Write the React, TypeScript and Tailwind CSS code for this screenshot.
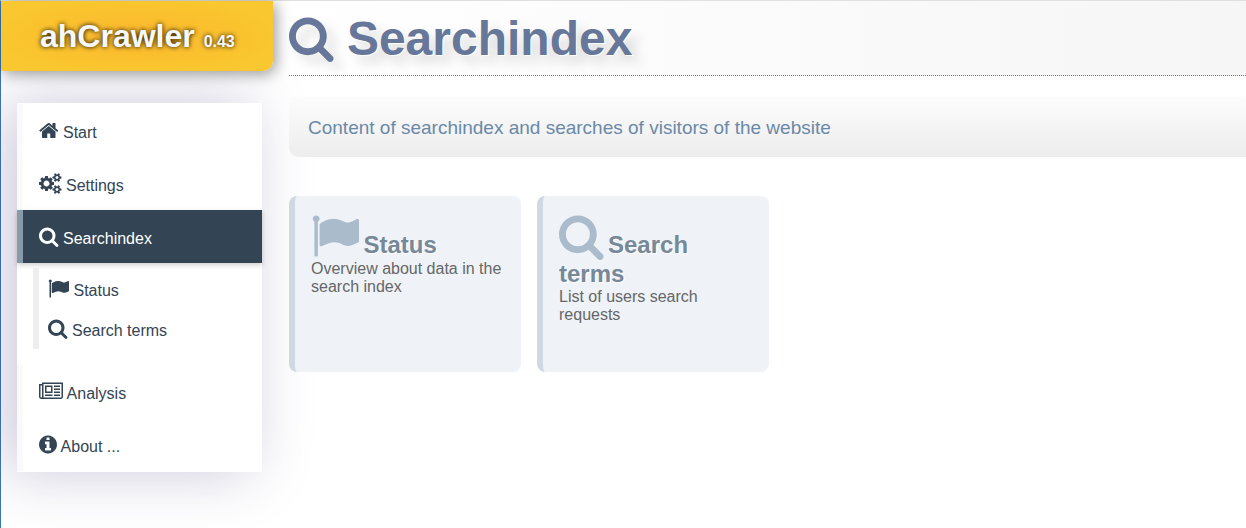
import React from "react";

type Glyph = { box: string; d: string };

const glyphs: Record<string, Glyph> = {
  home: {
    box: "64 0 1664 1792",
    d: "M1472 992v480q0 26-19 45t-45 19h-384v-384h-256v384h-384q-26 0-45-19t-19-45v-480q0-1 .5-3t.5-3l575-474 575 474q1 2 1 6zm223-69l-62 74q-8 9-21 11h-3q-13 0-21-7l-692-577-692 577q-12 8-24 7-13-2-21-11l-62-74q-8-10-7-23.5t11-21.5l719-599q32-26 76-26t76 26l244 204v-195q0-14 9-23t23-9h192q14 0 23 9t9 23v408l219 182q10 8 11 21.5t-7 23.5z",
  },
  cogs: {
    box: "-64 0 1920 1792",
    d: "M832 896q0-106-75-181t-181-75-181 75-75 181 75 181 181 75 181-75 75-181zm768 512q0-52-38-90t-90-38-90 38-38 90q0 53 37.5 90.5t90.5 37.5 90.5-37.5 37.5-90.5zm0-1024q0-52-38-90t-90-38-90 38-38 90q0 53 37.5 90.5t90.5 37.5 90.5-37.5 37.5-90.5zm-384 421v185q0 10-7 19.5t-16 10.5l-155 24q-11 35-32 76 34 48 90 115 7 11 7 20 0 12-7 19-23 30-82.5 89.5t-78.5 59.5q-11 0-21-7l-115-90q-37 19-77 31-11 108-23 155-7 24-30 24h-186q-11 0-20-7.5t-10-17.5l-23-153q-34-10-75-31l-118 89q-7 7-20 7-11 0-21-8-144-133-144-160 0-9 7-19 10-14 41-53t47-61q-23-44-35-82l-152-24q-10-1-17-9.5t-7-19.5v-185q0-10 7-19.5t16-10.5l155-24q11-35 32-76-34-48-90-115-7-11-7-20 0-12 7-20 22-30 82-89t79-59q11 0 21 7l115 90q34-18 77-32 11-108 23-154 7-24 30-24h186q11 0 20 7.5t10 17.5l23 153q34 10 75 31l118-89q8-7 20-7 11 0 21 8 144 133 144 160 0 8-7 19-12 16-42 54t-45 60q23 48 34 82l152 23q10 2 17 10.5t7 19.5zm640 533v140q0 16-149 31-12 27-30 52 51 113 51 138 0 4-4 7-122 71-124 71-8 0-46-47t-52-68q-20 2-30 2t-30-2q-14 21-52 68t-46 47q-2 0-124-71-4-3-4-7 0-25 51-138-18-25-30-52-149-15-149-31v-140q0-16 149-31 13-29 30-52-51-113-51-138 0-4 4-7 4-2 35-20t59-34 30-16q8 0 46 46.5t52 67.5q20-2 30-2t30 2q51-71 92-112l6-2q4 0 124 70 4 3 4 7 0 25-51 138 17 23 30 52 149 15 149 31zm0-1024v140q0 16-149 31-12 27-30 52 51 113 51 138 0 4-4 7-122 71-124 71-8 0-46-47t-52-68q-20 2-30 2t-30-2q-14 21-52 68t-46 47q-2 0-124-71-4-3-4-7 0-25 51-138-18-25-30-52-149-15-149-31v-140q0-16 149-31 13-29 30-52-51-113-51-138 0-4 4-7 4-2 35-20t59-34 30-16q8 0 46 46.5t52 67.5q20-2 30-2t30 2q51-71 92-112l6-2q4 0 124 70 4 3 4 7 0 25-51 138 17 23 30 52 149 15 149 31z",
  },
  search: {
    box: "64 0 1664 1792",
    d: "M1216 832q0-185-131.5-316.5t-316.5-131.5-316.5 131.5-131.5 316.5 131.5 316.5 316.5 131.5 316.5-131.5 131.5-316.5zm512 832q0 52-38 90t-90 38q-54 0-90-38l-343-342q-179 124-399 124-143 0-273.5-55.5t-225-150-150-225-55.5-273.5 55.5-273.5 150-225 225-150 273.5-55.5 273.5 55.5 225 150 150 225 55.5 273.5q0 220-124 399l343 343q37 37 37 90z",
  },
  flag: {
    box: "0 0 1792 1792",
    d: "M320 256q0 72-64 110v1266q0 13-9.5 22.5t-22.5 9.5h-64q-13 0-22.5-9.5t-9.5-22.5v-1266q-64-38-64-110 0-53 37.5-90.5t90.5-37.5 90.5 37.5 37.5 90.5zm1472 64v763q0 25-12.5 38.5t-39.5 27.5q-215 116-369 116-61 0-123.5-22t-108.5-48-115.5-48-142.5-22q-192 0-464 146-17 9-33 9-26 0-45-19t-19-45v-742q0-32 31-55 21-14 79-43 236-120 421-120 107 0 200 29t219 88q38 19 88 19 54 0 117.5-21t110-47 88-47 54.5-21q26 0 45 19t19 45z",
  },
  news: {
    box: "0 0 2048 1792",
    d: "M1024 512h-384v384h384v-384zm128 640v128h-640v-128h640zm0-768v640h-640v-640h640zm640 768v128h-512v-128h512zm0-256v128h-512v-128h512zm0-256v128h-512v-128h512zm0-256v128h-512v-128h512zm-1536 960v-960h-128v960q0 26 19 45t45 19 45-19 19-45zm1664 0v-1088h-1536v1088q0 33-11 64h1483q26 0 45-19t19-45zm128-1216v1216q0 80-56 136t-136 56h-1664q-80 0-136-56t-56-136v-1088h256v-128h1792z",
  },
  info: {
    box: "128 0 1536 1792",
    d: "M1152 1376v-160q0-14-9-23t-23-9h-96v-512q0-14-9-23t-23-9h-320q-14 0-23 9t-9 23v160q0 14 9 23t23 9h96v320h-96q-14 0-23 9t-9 23v160q0 14 9 23t23 9h448q14 0 23-9t9-23zm-128-896v-160q0-14-9-23t-23-9h-192q-14 0-23 9t-9 23v160q0 14 9 23t23 9h192q14 0 23-9t9-23zm640 416q0 209-103 385.5t-279.5 279.5-385.5 103-385.5-103-279.5-279.5-103-385.5 103-385.5 279.5-279.5 385.5-103 385.5 103 279.5 279.5 103 385.5z",
  },
};

function Icon({ name, className }: { name: string; className: string }) {
  const { box, d } = glyphs[name];
  return (
    <svg viewBox={box} fill="currentColor" aria-hidden="true" className={`inline w-auto ${className}`}>
      <path d={d} />
    </svg>
  );
}

function NavLink({ icon, label, active = false }: { icon: string; label: string; active?: boolean }) {
  return (
    <a
      href="#"
      className={`block h-[53px] border-l-6 pt-4 pl-4 leading-5 ${
        active
          ? "border-[#8899aa] bg-[#334455] text-white shadow-[0_2px_5px_rgba(0,0,0,0.2)]"
          : "border-[#fafafa] text-[#334455]"
      }`}
    >
      <Icon name={icon} className="h-[21px] align-[-3px]" /> {label}
    </a>
  );
}

function SubLink({ icon, label }: { icon: string; label: string }) {
  return (
    <a href="#" className="block h-10 pt-[10px] pl-[9px] leading-5 text-[#334455]">
      <Icon name={icon} className="h-[21px] align-[-3px]" /> {label}
    </a>
  );
}

function Card({ icon, title, text }: { icon: string; title: string; text: string }) {
  return (
    <a
      href="#"
      className="block h-44 w-[232px] rounded-lg border-l-6 border-[#d0d9e2] bg-[#eff3f8] p-4 leading-[18px] text-[#666666]"
    >
      <Icon name={icon} className="h-12 align-[-7px] text-[#aabbcc]" />{" "}
      <strong className="text-2xl leading-7 font-bold text-[#778899] [text-shadow:1px_1px_0_#fff]">{title}</strong>
      <br />
      {text}
    </a>
  );
}

export default function App() {
  return (
    <div className="flex min-h-screen border-t border-l border-t-[#e0e0e0] border-l-[#3c77b5] bg-white font-['Liberation_Sans',Arial,sans-serif] text-base">
      <aside className="w-[272px] shrink-0">
        <a
          href="#"
          className="relative block h-[70px] rounded-br-[10px] bg-[radial-gradient(ellipse_at_center,#fcb72c_0%,#f9c72f_75%)] pt-[17px] pl-[39px] text-[32px] leading-9 font-bold text-[#f8f8f8] shadow-[3px_3px_15px_rgba(0,0,0,0.4)] [text-shadow:0_0_5px_#000]"
        >
          ahCrawler <span className="text-base">0.43</span>
        </a>
        <nav className="mt-8 mr-[11px] ml-4 bg-white py-px shadow-[-12px_0_56px_rgba(50,40,110,0.25)]">
          <ul>
            <li><NavLink icon="home" label="Start" /></li>
            <li><NavLink icon="cogs" label="Settings" /></li>
            <li>
              <NavLink icon="search" label="Searchindex" active />
              <ul className="mt-[5px] mb-4 ml-4 border-l-6 border-[#eeeeee] pb-px">
                <li><SubLink icon="flag" label="Status" /></li>
                <li><SubLink icon="search" label="Search terms" /></li>
              </ul>
            </li>
            <li><NavLink icon="news" label="Analysis" /></li>
            <li><NavLink icon="info" label="About ..." /></li>
          </ul>
        </nav>
      </aside>
      <main className="min-w-0 flex-1 pl-4">
        <h1 className="h-[75px] border-b border-dotted border-[#667799] bg-linear-to-r from-white to-[#f6f6f6] pt-[10px] text-5xl leading-[56px] font-bold text-[#667799] [text-shadow:1px_1px_0_#fff,8px_8px_12px_rgba(0,0,0,0.15)]">
          <Icon
            name="search"
            className="h-12 overflow-visible align-[-7px] [filter:drop-shadow(8px_8px_6px_rgba(0,0,0,0.12))]"
          />{" "}
          Searchindex
        </h1>
        <p className="mt-[21px] rounded-bl-[10px] bg-linear-to-b from-[#fcfcfc] to-[#ededed] px-[19px] pt-[21px] pb-[19px] text-[19px] leading-5 text-[#6a89a8]">
          Content of searchindex and searches of visitors of the website
        </p>
        <div className="mt-[39px] flex flex-wrap gap-4">
          <Card icon="flag" title="Status" text="Overview about data in the search index" />
          <Card icon="search" title="Search terms" text="List of users search requests" />
        </div>
      </main>
    </div>
  );
}
